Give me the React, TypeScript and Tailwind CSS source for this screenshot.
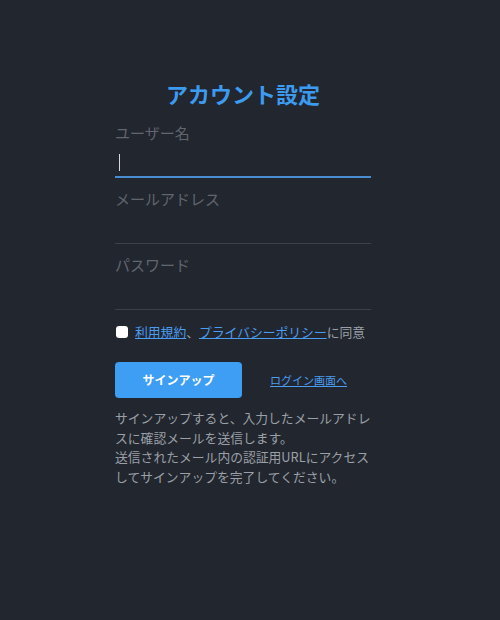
import { useState } from "react";

const FONT = { fontFamily: '"Noto Sans CJK JP", "Noto Sans", sans-serif' };

interface FieldProps {
  label: string;
  type?: string;
  focused?: boolean;
}

const Field = ({ label, type = "text", focused }: FieldProps) => (
  <label className="block">
    <span className="block text-[15px] leading-[20px] text-[#60656f]">{label}</span>
    <div
      className={
        focused
          ? "mt-[6px] h-[29px] border-b-2 border-[#4a8cd0] flex items-center"
          : "mt-[6px] h-[29px] border-b border-[#3c414b] flex items-center"
      }
    >
      {focused && <span className="ml-[4px] w-px h-[17px] bg-[#d8d8d8]" />}
      <input type={type} className="sr-only" />
    </div>
  </label>
);

const App = () => {
  const [agreed, setAgreed] = useState(false);
  return (
    <div className="min-h-[620px] bg-[#22262e]" style={FONT}>
      <div className="w-[256px] ml-[115px] pt-[77px]">
        <h1 className="text-center text-[22px] leading-[32px] font-bold text-[#3c9bef]">
          アカウント設定
        </h1>
        <div className="mt-[14px] flex flex-col gap-[11px]">
          <Field label="ユーザー名" focused />
          <Field label="メールアドレス" type="email" />
          <Field label="パスワード" type="password" />
        </div>
        <div className="mt-[13px] flex items-center gap-[7px] text-[12.8px] leading-[18px] text-[#9ba0a8]">
          <input
            type="checkbox"
            checked={agreed}
            onChange={(e) => setAgreed(e.target.checked)}
            className="appearance-none w-[12px] h-[12px] m-0 ml-px rounded-[3px] bg-white checked:bg-[#3e9ef4]"
          />
          <span>
            <a href="#" className="text-[#4a9df0] underline">利用規約</a>、
            <a href="#" className="text-[#4a9df0] underline">プライバシーポリシー</a>に同意
          </span>
        </div>
        <div className="mt-[21px] flex items-center">
          <button className="w-[127px] h-[36px] rounded-[4px] bg-[#3e9ef4] text-white text-[12px] font-bold">
            サインアップ
          </button>
          <a href="#" className="ml-[28px] text-[11px] text-[#4a9df0] underline">
            ログイン画面へ
          </a>
        </div>
        <p className="mt-[10px] text-[12.8px] leading-[19.5px] text-[#9ba0a8]">
          サインアップすると、入力したメールアドレスに確認メールを送信します。
          <br />
          送信されたメール内の認証用URLにアクセスしてサインアップを完了してください。
        </p>
      </div>
    </div>
  );
};

export default App;
